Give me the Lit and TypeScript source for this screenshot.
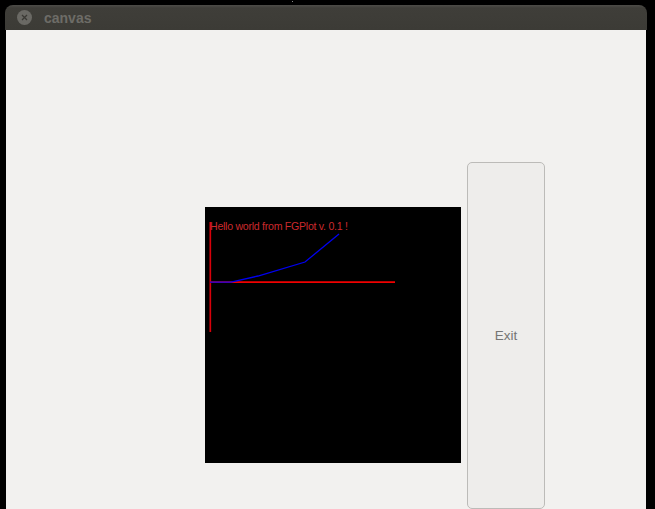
import { LitElement, html, css } from "lit";
import { customElement } from "lit/decorators.js";

@customElement("app-root")
export class AppRoot extends LitElement {
  static styles = css`
    :host { display: block; position: relative; width: 655px; height: 509px; background: #000; overflow: hidden; font-family: "Liberation Sans", Arial, sans-serif; }
    .speck { position: absolute; left: 292px; top: 1px; width: 1px; height: 1px; background: #8a8a88; }
    .window { margin: 5px 0 0 5px; width: 642px; height: 504px; display: flex; flex-direction: column; }
    .titlebar { height: 25px; flex: none; box-sizing: border-box; display: flex; align-items: center; padding-left: 12px; gap: 12px;
      background: linear-gradient(#4d4c48, #3f3e39 12%, #3c3b36); border-radius: 8px 8px 0 0; }
    .close { width: 15px; height: 15px; border-radius: 50%; background: #6a6964; display: flex; align-items: center; justify-content: center; }
    .title { font-size: 14px; font-weight: bold; color: #6d6c67; }
    .body { flex: 1; background: #f2f1ef; display: flex; align-items: flex-start; gap: 6px; margin: 0 1px; padding-left: 199px; }
    .plot { display: block; width: 256px; height: 256px; margin-top: 177px; background: #000; flex: none; }
    .plot text { font-family: "Liberation Sans", Arial, sans-serif; font-size: 10.6px; fill: #cc2a2d; }
    .exit { width: 78px; height: 347px; margin-top: 132px; box-sizing: border-box; flex: none; padding: 0; border: 1px solid #bcbbb8; border-radius: 5px;
      background: #eeedeb; color: #757574; font: 13.5px "Liberation Sans", Arial, sans-serif; }
  `;

  render() {
    return html`
      <div class="speck"></div>
      <div class="window">
        <div class="titlebar">
          <div class="close">
            <svg width="7" height="7" viewBox="0 0 7 7"><path d="M1 1L6 6M6 1L1 6" stroke="#3b3a35" stroke-width="1.3" fill="none"/></svg>
          </div>
          <div class="title">canvas</div>
        </div>
        <div class="body">
          <svg class="plot" viewBox="0 0 256 256">
            <line x1="5.3" y1="15" x2="5.3" y2="125" stroke="#d8000a" stroke-width="1.7"/>
            <line x1="5" y1="75.2" x2="190" y2="75.2" stroke="#f00000" stroke-width="1.7"/>
            <polyline points="5,75.2 26,75.2 53,69 100,55 134,27" fill="none" stroke="#0000f0" stroke-width="1.3"/>
            <text x="5" y="23" textLength="138" lengthAdjust="spacing">Hello world from FGPlot v. 0.1 !</text>
          </svg>
          <button class="exit">Exit</button>
        </div>
      </div>
    `;
  }
}
